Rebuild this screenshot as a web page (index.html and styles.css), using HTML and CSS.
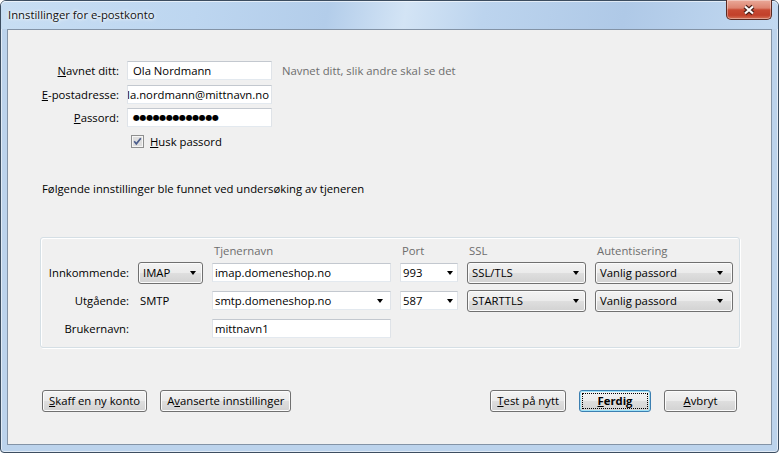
FILE: index.html
```html
<!DOCTYPE html>
<html lang="no">
<head>
<meta charset="utf-8">
<title>Innstillinger for e-postkonto</title>
<link rel="stylesheet" href="styles.css">
</head>
<body>
<div class="window">
  <div class="titlebar">
    <span class="title">Innstillinger for e-postkonto</span>
    <div class="close" aria-label="Lukk">
      <svg width="14" height="12" viewBox="0 0 14 12">
        <path d="M3 2.5 L11 9.5 M11 2.5 L3 9.5" stroke="#4a2019" stroke-width="4.4" fill="none"/>
        <path d="M3 2.5 L11 9.5 M11 2.5 L3 9.5" stroke="#ffffff" stroke-width="2.2" fill="none"/>
      </svg>
    </div>
  </div>
  <div class="client">
    <div class="identity">
      <span class="lbl"><u>N</u>avnet ditt:</span>
      <div class="textbox pad">Ola Nordmann</div>
      <span class="hint">Navnet ditt, slik andre skal se det</span>

      <span class="lbl"><u>E</u>-postadresse:</span>
      <div class="textbox scrolled"><span>ola.nordmann@mittnavn.no</span></div>
      <span></span>

      <span class="lbl"><u>P</u>assord:</span>
      <div class="textbox pad dots">●●●●●●●●●●●●●</div>
      <span></span>

      <span></span>
      <div class="check">
        <svg class="checkbox" width="13" height="13" viewBox="0 0 13 13">
          <rect x="0.5" y="0.5" width="12" height="12" fill="#f6f6f6" stroke="#8e8f8f"/>
          <rect x="2" y="2" width="9" height="9" fill="#dedede"/>
          <path d="M3.2 6.3 L5.3 8.8 L9.8 3.2" stroke="#4b5d8c" stroke-width="1.7" fill="none"/>
        </svg>
        <span><u>H</u>usk passord</span>
      </div>
    </div>

    <p class="found">Følgende innstillinger ble funnet ved undersøking av tjeneren</p>

    <div class="servers">
      <div class="cols head">
        <span></span><span></span>
        <span>Tjenernavn</span>
        <span>Port</span>
        <span>SSL</span>
        <span>Autentisering</span>
      </div>
      <div class="cols rows">
        <span class="lbl">Innkommende:</span>
        <div class="select"><span>IMAP</span><i class="arrow"></i></div>
        <div class="textbox">imap.domeneshop.no</div>
        <div class="textbox combo"><span>993</span><i class="arrow"></i></div>
        <div class="select"><span>SSL/TLS</span><i class="arrow"></i></div>
        <div class="select"><span>Vanlig passord</span><i class="arrow wide"></i></div>

        <span class="lbl">Utgående:</span>
        <span class="plain">SMTP</span>
        <div class="textbox combo"><span>smtp.domeneshop.no</span><i class="arrow wide"></i></div>
        <div class="textbox combo"><span>587</span><i class="arrow"></i></div>
        <div class="select"><span>STARTTLS</span><i class="arrow"></i></div>
        <div class="select"><span>Vanlig passord</span><i class="arrow wide"></i></div>

        <span class="lbl">Brukernavn:</span>
        <span></span>
        <div class="textbox">mittnavn1</div>
      </div>
    </div>

    <div class="actions">
      <div class="group">
        <div class="btn"><u>S</u>kaff en ny konto</div>
        <div class="btn">A<u>v</u>anserte innstillinger</div>
      </div>
      <div class="group">
        <div class="btn"><u>T</u>est på nytt</div>
        <div class="btn default"><u>F</u>erdig</div>
        <div class="btn"><u>A</u>vbryt</div>
      </div>
    </div>
  </div>
</div>
</body>
</html>
```

FILE: styles.css
```css
* { box-sizing: border-box; }
html, body { margin: 0; padding: 0; }
body {
  width: 779px;
  height: 453px;
  overflow: hidden;
  background: #ffffff;
  font-family: "Open Sans", "Noto Sans", "Liberation Sans", sans-serif;
  font-size: 11.3px;
  color: #000;
}

.window {
  width: 779px;
  height: 453px;
  border: 1px solid #3c4d60;
  border-radius: 6px 6px 4px 4px;
  padding: 0 6px 7px;
  display: flex;
  flex-direction: column;
  background: #bcd3ec;
  box-shadow: inset 0 0 0 1px rgba(255,255,255,0.55);
}

.titlebar {
  height: 28px;
  margin: 0 -6px;
  padding: 0 6px 0 7px;
  display: flex;
  justify-content: space-between;
  align-items: flex-start;
  border-radius: 5px 5px 0 0;
  background: linear-gradient(100deg, #c8def3 0%, #bdd6f0 25%, #b3cdea 42%, #d3e4f5 52%, #bcd4ee 62%, #afc9e7 80%, #c2d9f1 100%);
  box-shadow: inset 0 1px 0 rgba(255,255,255,0.6);
}
.title {
  padding-top: 6px;
  line-height: 16px;
  font-size: 11.3px;
  color: #111;
  text-shadow: 0 0 5px #fff, 0 0 3px #fff;
}
.close {
  width: 46px;
  height: 20px;
  margin-top: -1px;
  border: 1px solid #5a2a22;
  border-top: none;
  border-radius: 0 0 5px 5px;
  background: linear-gradient(#eaa999 0%, #dd8470 42%, #c84a33 52%, #c2402a 80%, #d57257 100%);
  box-shadow: inset 0 0 0 1px rgba(255,255,255,0.35);
  display: flex;
  align-items: center;
  justify-content: center;
}

.client {
  flex: 1;
  background: #f0f0f0;
  border: 1px solid #8393a6;
  padding: 31px 30px 0 32px;
  display: flex;
  flex-direction: column;
}

.identity {
  display: grid;
  grid-template-columns: 79px 145px auto;
  grid-auto-rows: 19px;
  row-gap: 4.5px;
  column-gap: 8px;
  align-items: center;
}
.lbl { text-align: right; white-space: nowrap; }
.hint { color: #6d6d6d; margin-left: 2px; white-space: nowrap; }

.textbox {
  height: 19px;
  background: #fff;
  border: 1px solid;
  border-color: #c3c8cf #dfe3e8 #e3e9ef #dfe3e8;
  padding: 0 2px;
  line-height: 17px;
  white-space: nowrap;
  overflow: hidden;
}
.textbox.pad { padding-left: 5px; }
.textbox.scrolled {
  display: flex;
  justify-content: flex-end;
  padding-right: 2px;
}
.textbox.scrolled span { flex: none; }
.dots {
  font-family: "DejaVu Sans", sans-serif;
  font-size: 8px;
  letter-spacing: -0.4px;
}

.check {
  display: flex;
  align-items: center;
  gap: 6px;
  padding-left: 4px;
  white-space: nowrap;
}
.checkbox { flex: none; }

.found {
  margin: 30px 0 0 2px;
  line-height: 16px;
}

.servers {
  margin-top: 40px;
  width: 700px;
  border: 1px solid #d5dfe5;
  border-radius: 3px;
  padding: 5px 5px 7px 6px;
  box-shadow: inset 1px 1px 0 #fff, 1px 1px 0 #fff;
}
.cols {
  display: grid;
  grid-template-columns: 82px 65px 179px 58px 119px 138px;
  column-gap: 9px;
}
.head {
  height: 15px;
  line-height: 15px;
  margin-bottom: 4px;
  color: #6d6d6d;
}
.head span { padding-left: 2px; }
.rows {
  grid-auto-rows: 22px;
  row-gap: 6px;
  align-items: center;
}
.plain { padding-left: 2px; }

.select {
  height: 22px;
  border: 1px solid #707070;
  border-radius: 3px;
  background: linear-gradient(#f3f3f3 0%, #ebebeb 48%, #dedede 52%, #d2d2d2 100%);
  box-shadow: inset 0 0 0 1px #fbfbfb;
  display: flex;
  align-items: center;
  justify-content: space-between;
  padding: 0 6px 0 4px;
  white-space: nowrap;
}
.combo {
  display: flex;
  align-items: center;
  justify-content: space-between;
  padding-right: 4px;
}
.arrow {
  flex: none;
  width: 0;
  height: 0;
  border-style: solid;
  border-width: 4px 3.5px 0 3.5px;
  border-color: #000 transparent transparent transparent;
}
.arrow.wide { margin-right: 3px; }

.actions {
  margin-top: 42px;
  width: 700px;
  padding: 0 3px 0 2px;
  display: flex;
  justify-content: space-between;
}
.group { display: flex; gap: 13px; }
.btn {
  height: 22px;
  min-width: 73px;
  padding: 0 6px;
  border: 1px solid #707070;
  border-radius: 3px;
  background: linear-gradient(#f3f3f3 0%, #ebebeb 48%, #dedede 52%, #d2d2d2 100%);
  box-shadow: inset 0 0 0 1px #fbfbfb;
  line-height: 20px;
  text-align: center;
  white-space: nowrap;
}
.btn.default {
  min-width: 72px;
  border-color: #3c7fb1;
  box-shadow: inset 0 0 0 1px #9fe3f9;
  font-weight: bold;
  outline: 1px dotted #000;
  outline-offset: -4px;
}
```
